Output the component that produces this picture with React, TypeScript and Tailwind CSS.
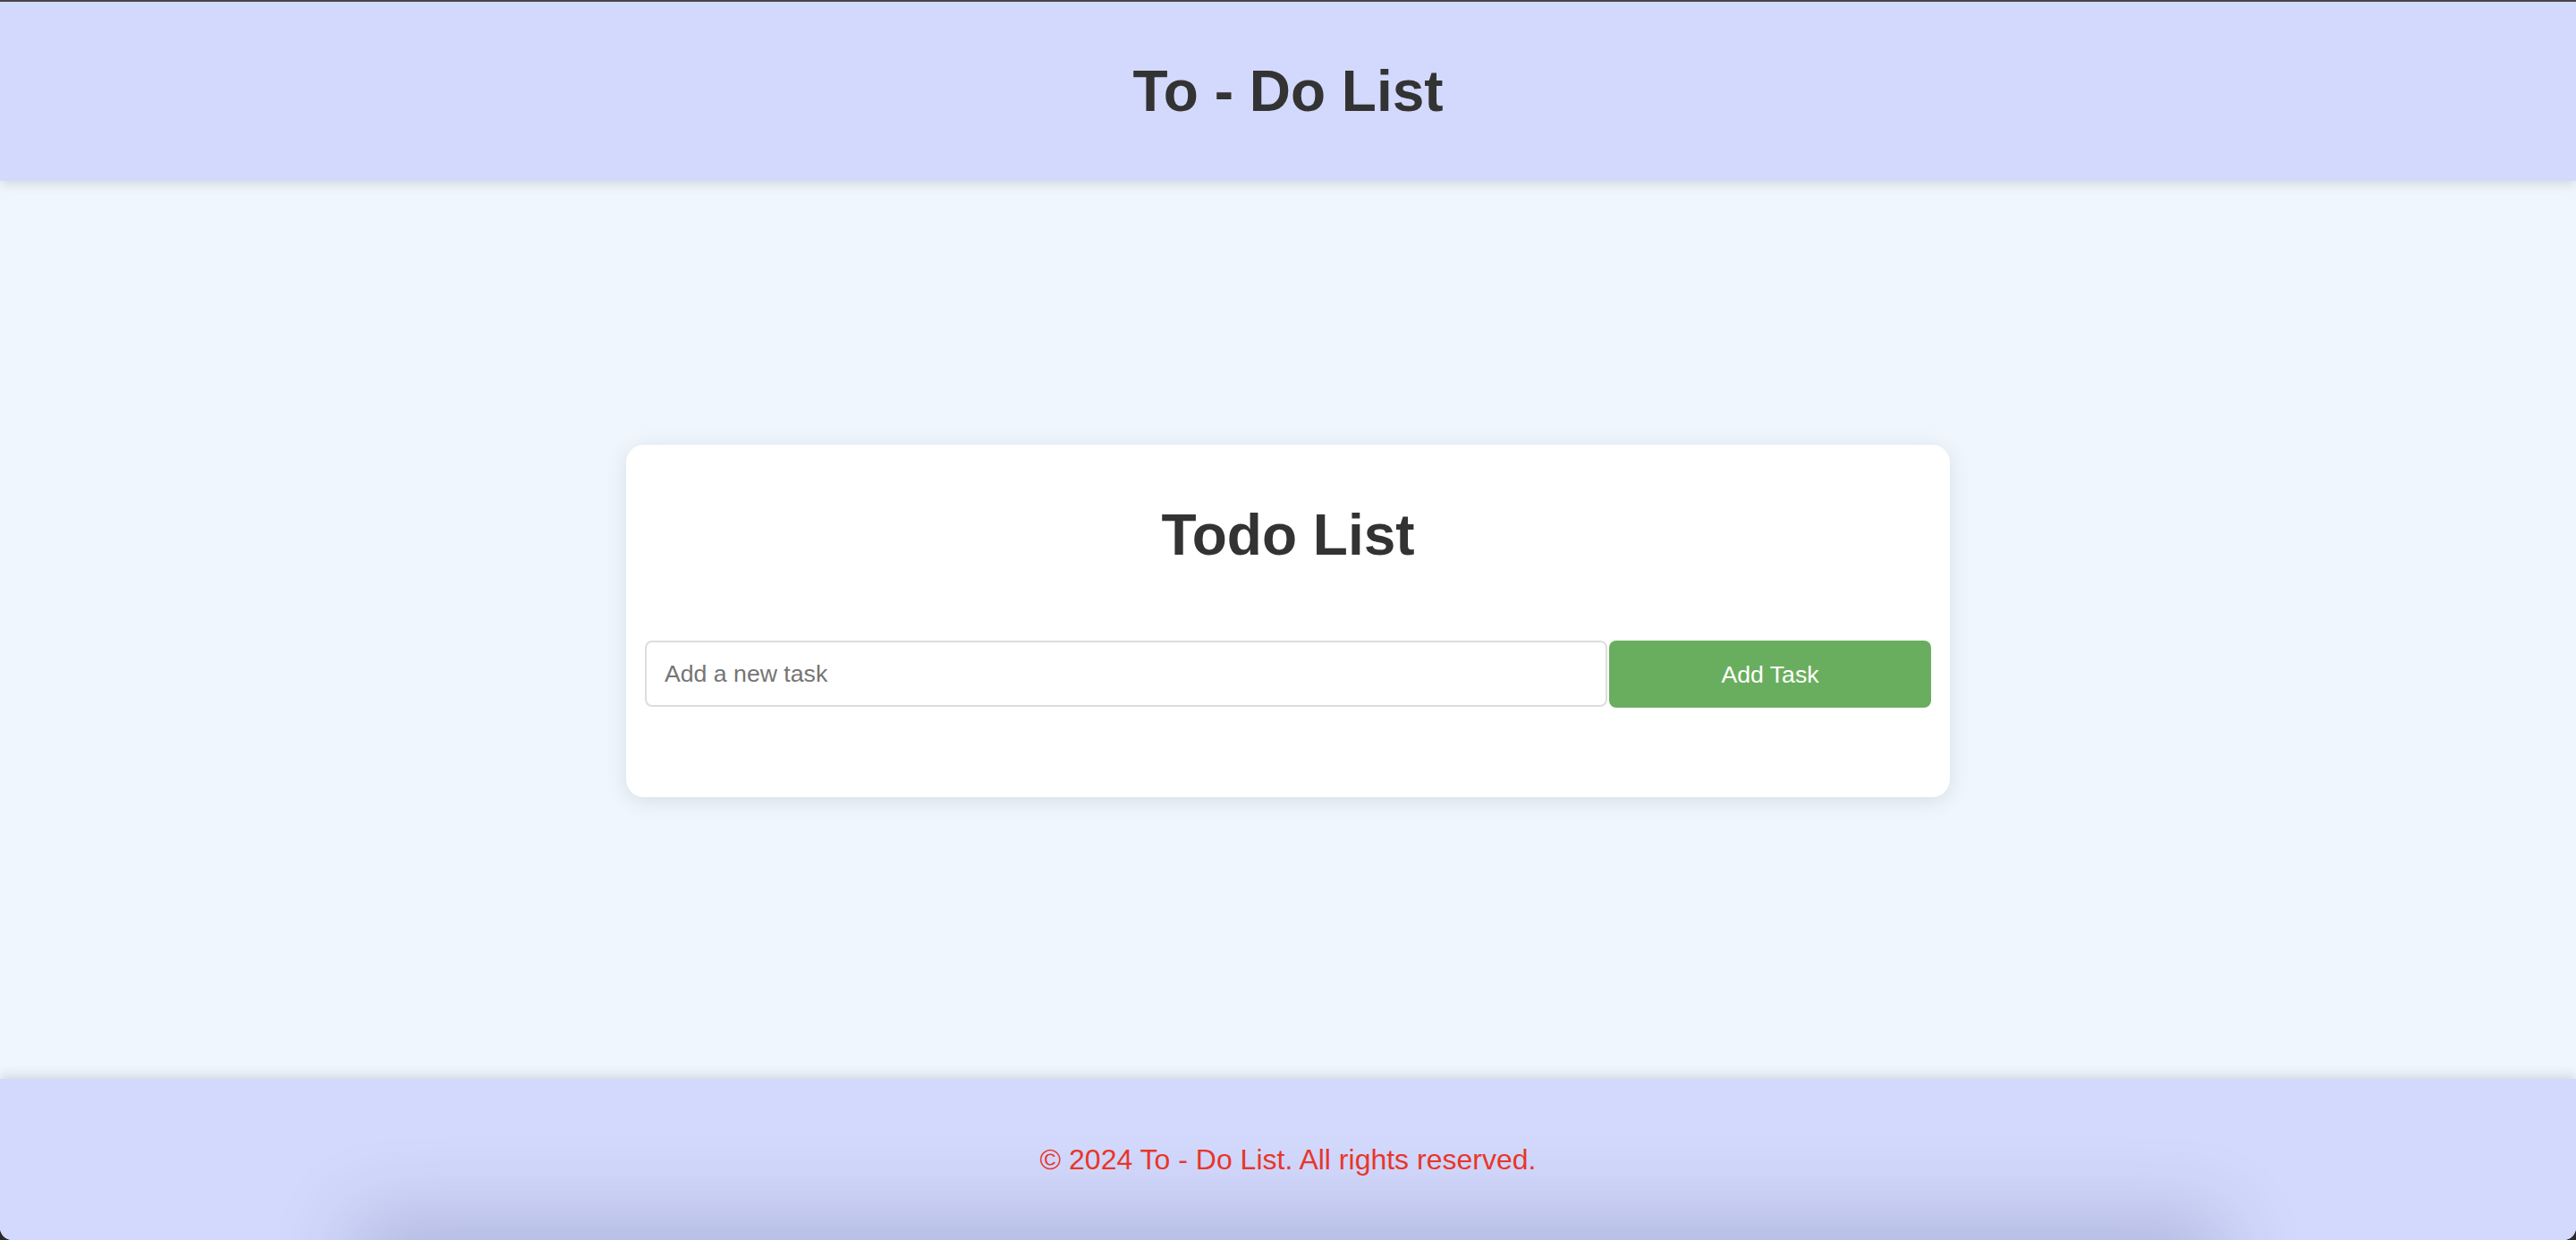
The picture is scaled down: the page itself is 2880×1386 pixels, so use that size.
export default function App() {
  return (
    <div className="h-[1386px] w-full bg-[#2b2a2d] font-['Liberation_Sans',Arial,sans-serif]">
      <div className="flex h-full flex-col overflow-hidden rounded-b-[14px] border-t-2 border-[#4a4347] bg-[#eff6fe]">
        <header className="relative z-10 flex h-[200px] shrink-0 items-center justify-center bg-[#d3d9fc] shadow-[0_4px_12px_rgba(0,0,0,0.12)]">
          <h1 className="text-[64px] font-bold leading-[74px] text-[#333]">To - Do List</h1>
        </header>

        <main className="flex flex-1 justify-center pt-[295px]">
          <div className="h-fit w-[1480px] rounded-[20px] bg-white px-[21px] pt-[20px] pb-[100px] shadow-[0_4px_24px_rgba(0,0,0,0.1)]">
            <h2 className="mt-[44px] text-center text-[64px] font-bold leading-[74px] text-[#333]">Todo List</h2>
            <div className="mt-[81px] flex gap-[2px]">
              <input
                type="text"
                placeholder="Add a new task"
                className="h-[74px] min-w-0 flex-1 rounded-[8px] border-2 border-[#dddddd] bg-white px-[20px] text-[26.67px] text-[#333] outline-none placeholder:text-[#757575]"
              />
              <button className="h-[75px] w-[360px] shrink-0 rounded-[8px] bg-[#69ae5e] text-[26.67px] text-white">
                Add Task
              </button>
            </div>
          </div>
        </main>

        <footer className="relative flex h-[180px] shrink-0 items-center justify-center overflow-hidden bg-[#d3d9fc] shadow-[0_-4px_12px_rgba(0,0,0,0.12)]">
          <p className="relative z-10 text-[32px] leading-[37px] text-[#e8362a]">
            © 2024 To - Do List. All rights reserved.
          </p>
          <div className="absolute -bottom-[60px] left-[420px] right-[420px] h-[60px] shadow-[0_0_90px_24px_rgba(40,50,110,0.22)]" />
        </footer>
      </div>
    </div>
  )
}
